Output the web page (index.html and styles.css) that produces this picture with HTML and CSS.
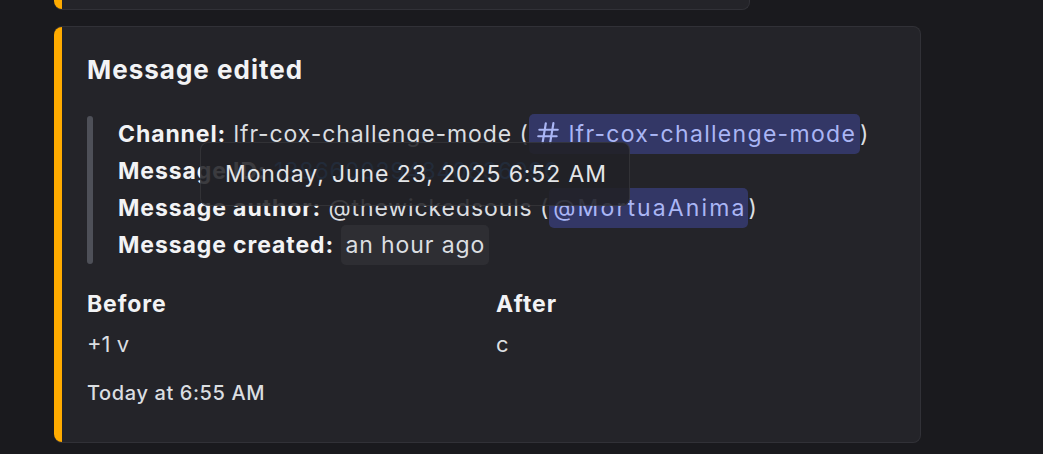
FILE: index.html
```html
<!DOCTYPE html>
<html>
<head>
<meta charset="utf-8">
<link rel="stylesheet" href="styles.css">
</head>
<body>
<div class="feed">
  <div class="card card-prev">
    <div class="accent"></div>
    <div class="card-body"></div>
  </div>
  <div class="card card-main">
    <div class="accent"></div>
    <div class="card-body">
      <div class="title">Message edited</div>
      <div class="quote">
        <div class="quote-bar"></div>
        <div class="quote-lines">
          <div class="line"><b>Channel:</b> lfr-cox-challenge-mode (<span class="mention channel"><svg class="hash" viewBox="0 0 24 24" width="26" height="26"><path fill="currentColor" fill-rule="evenodd" d="M10.99 3.16A1 1 0 1 0 9 2.84L8.15 8H4a1 1 0 0 0 0 2h3.82l-.67 4H3a1 1 0 1 0 0 2h3.82l-.8 4.84a1 1 0 0 0 1.970.32L8.85 16h4.97l-.8 4.84a1 1 0 0 0 1.97.32l.86-5.16H20a1 1 0 1 0 0-2h-3.82l.67-4H21a1 1 0 1 0 0-2h-3.82l.8-4.84a1 1 0 1 0-1.97-.32L15.15 8h-4.970l.8-4.84ZM14.15 14l.67-4H9.85l-.67 4h4.97Z"/></svg>lfr-cox-challenge-mode</span>)</div>
          <div class="line"><b>Message ID:</b> <span class="link">1386600294840836096</span></div>
          <div class="line"><b>Message author:</b> @thewickedsouls (<span class="mention user">@MortuaAnima</span>)</div>
          <div class="line"><b>Message created:</b> <span class="stamp">an hour ago</span></div>
        </div>
      </div>
      <div class="fields">
        <div class="field">
          <div class="field-name">Before</div>
          <div class="field-value">+1 v</div>
        </div>
        <div class="field">
          <div class="field-name">After</div>
          <div class="field-value">c</div>
        </div>
      </div>
      <div class="footer">Today at 6:55 AM</div>
    </div>
    <div class="tooltip">Monday, June 23, 2025 6:52 AM</div>
  </div>
</div>
</body>
</html>
```
FILE: styles.css
```css
html, body {
  margin: 0;
  padding: 0;
  background: #1a1a1e;
  font-family: Inter, "Noto Sans", sans-serif;
  color: #dbdee1;
}
.feed {
  padding-left: 54px;
  display: flex;
  flex-direction: column;
  gap: 16px;
  align-items: flex-start;
}
.card {
  display: flex;
  background: #242429;
  border: 1px solid #313137;
  border-left: none;
  border-radius: 8px;
  box-sizing: border-box;
}
.accent {
  width: 8px;
  flex: none;
  background: #ffab00;
  border-radius: 8px 0 0 8px;
}
.card-prev {
  width: 696px;
  height: 10px;
  border-top: none;
  border-radius: 0 0 8px 8px;
}
.card-prev .accent {
  border-radius: 0 0 0 8px;
}
.card-main {
  position: relative;
  width: 867px;
  height: 417px;
}
.card-body {
  flex: 1;
  padding: 25px 24px 0 25px;
}
.title {
  font-size: 26px;
  font-weight: 700;
  letter-spacing: 1px;
  color: #f2f3f5;
  line-height: 36px;
}
.quote {
  display: flex;
  margin-top: 28px;
  gap: 25px;
}
.quote-bar {
  width: 6px;
  border-radius: 4px;
  background: #4e5058;
  flex: none;
}
.quote-lines {
  display: flex;
  flex-direction: column;
}
.line {
  font-size: 23px;
  letter-spacing: 0.9px;
  line-height: 37px;
  height: 37px;
  white-space: nowrap;
}
.line b {
  color: #f2f3f5;
  font-weight: 700;
}
.mention {
  background: #333766;
  color: #aab6f5;
  border-radius: 5px;
  padding: 6px 3px;
}
.channel {
  padding-left: 6px;
  padding-right: 4px;
  letter-spacing: 1.3px;
}
.user {
  letter-spacing: 2.1px;
  padding-left: 4px;
  padding-right: 2px;
}
.hash {
  display: inline-block;
  vertical-align: -4px;
  margin-right: 8px;
}
.link {
  color: #2b72c6;
}
.stamp {
  background: #2e2e33;
  border-radius: 5px;
  padding: 6px 4px;
}
.fields {
  display: grid;
  grid-template-columns: 409px 1fr;
  margin-top: 22px;
}
.field-name {
  font-size: 23px;
  font-weight: 700;
  letter-spacing: 0.9px;
  color: #f2f3f5;
  line-height: 36px;
}
.field-value {
  font-size: 22px;
  line-height: 36px;
  margin-top: 4px;
  color: #dbdee1;
}
.footer {
  margin-top: 16px;
  font-size: 20px;
  font-weight: 500;
  letter-spacing: 0.6px;
  line-height: 30px;
  color: #dbdee1;
}
.tooltip {
  position: absolute;
  left: 146px;
  top: 115px;
  width: 430px;
  height: 64px;
  box-sizing: border-box;
  padding-left: 24px;
  display: flex;
  align-items: center;
  background: rgba(33, 33, 38, 0.88);
  border: 1px solid rgba(255, 255, 255, 0.08);
  border-radius: 8px;
  font-size: 23px;
  letter-spacing: 0.9px;
  color: #e3e5e8;
}
```
